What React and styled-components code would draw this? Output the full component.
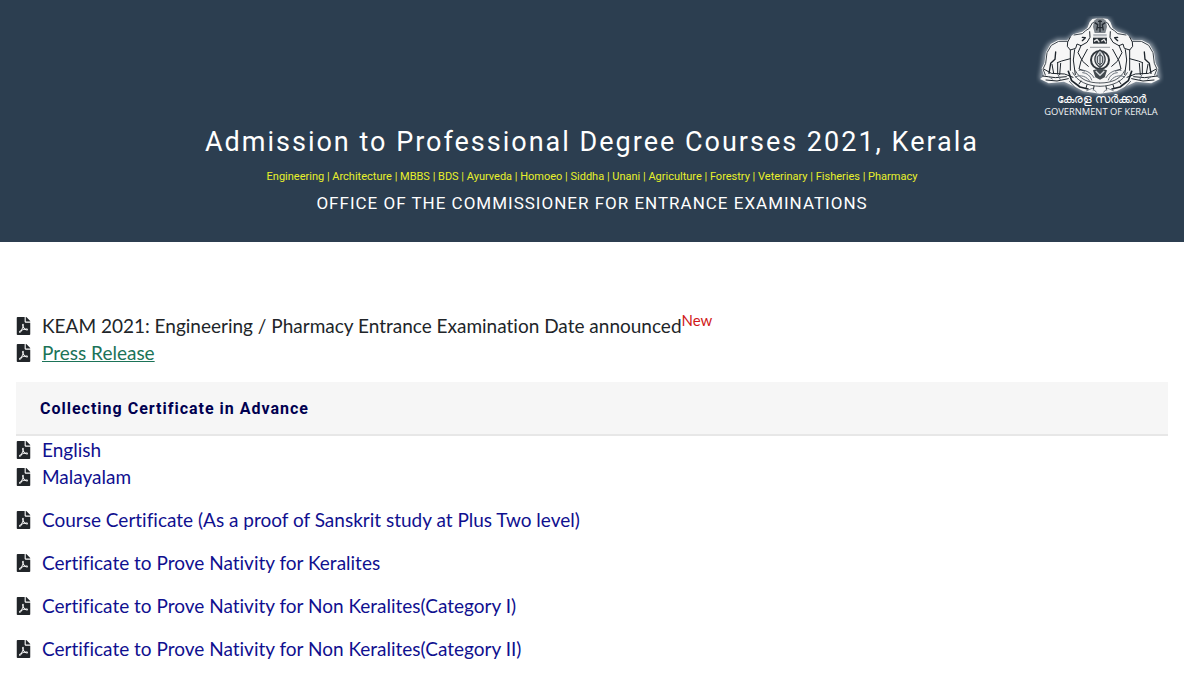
import React from 'react';
import styled, { createGlobalStyle } from 'styled-components';
import { FaFilePdf } from 'react-icons/fa';

const GlobalStyle = createGlobalStyle`
  * { box-sizing: border-box; }
  body {
    margin: 0;
    background: #fff;
    color: #212529;
    font-family: Lato, "Liberation Sans", sans-serif;
    font-size: 19px;
    line-height: 27px;
    font-variant-ligatures: no-common-ligatures;
  }
`;

const Page = styled.div`
  padding-right: 16px;
`;

const Header = styled.header`
  display: flex;
  flex-direction: column;
  align-items: center;
  padding: 16px 20px 27px;
  background: #2c3e50;
  color: #fff;
  font-family: Roboto, "Liberation Sans", sans-serif;
  text-align: center;
`;

const Emblem = styled.svg`
  width: 128px;
  height: 102px;
  align-self: flex-end;
`;

const Title = styled.h1`
  margin: 4px 0 0;
  font-size: 27px;
  font-weight: 400;
  line-height: 40px;
  letter-spacing: 2px;
`;

const Courses = styled.p`
  margin: 5px 0 0;
  color: #e8f02a;
  font-size: 11px;
  line-height: 20px;
`;

const Office = styled.h2`
  margin: 4px 0 0;
  font-size: 17px;
  font-weight: 400;
  line-height: 24px;
  letter-spacing: 1px;
`;

const Main = styled.main`
  padding: 70px 16px 0;
`;

const List = styled.ul`
  margin: 0;
  padding: 0;
  list-style: none;
`;

const Item = styled.li`
  display: flex;
  align-items: center;
  margin-bottom: ${(p) => (p.$spaced ? '16px' : '0')};
`;

const PdfIcon = styled(FaFilePdf)`
  width: 15px;
  height: 18px;
  margin-right: 11px;
`;

const Link = styled.a`
  color: ${(p) => (p.$visited ? '#1b7358' : '#10108f')};
  text-decoration: ${(p) => (p.$visited ? 'underline' : 'none')};
`;

const New = styled.sup`
  color: #d01818;
  font-size: 15px;
  line-height: 0;
`;

const SectionHead = styled.h3`
  margin: 16px 0 0;
  padding: 13px 24px 12px;
  background: #f6f6f6;
  border-bottom: 2px solid #e7e7e7;
  color: #000050;
  font-family: Roboto, "Liberation Sans", sans-serif;
  font-size: 16px;
  font-weight: 700;
  letter-spacing: 1px;
`;

const documents = [
  { title: 'English' },
  { title: 'Malayalam', spaced: true },
  { title: 'Course Certificate (As a proof of Sanskrit study at Plus Two level)', spaced: true },
  { title: 'Certificate to Prove Nativity for Keralites', spaced: true },
  { title: 'Certificate to Prove Nativity for Non Keralites(Category I)', spaced: true },
  { title: 'Certificate to Prove Nativity for Non Keralites(Category II)', spaced: true },
];

// one side of the state emblem, the other side is its mirror image
const EmblemHalf = () => (
  <g fill="none" stroke="#1d242b" strokeWidth="3" strokeLinejoin="round" strokeLinecap="round">
    <path
      d="M240 54 L217 57 L209 66 L202 84 L187 95 L160 103 L141 121 L115 120 L92 132 L78 157 L73 190 L65 205 L72 228 L60 237 L86 250 L132 245 L165 260 L190 274 L240 281 Z"
      fill="#f6f6f6"
      stroke="none"
    />
    {/* back and hind leg */}
    <path d="M142 124 L116 124 L94 136 L81 158 L77 190 L69 207 L76 225" stroke="#3a434b" />
    <path d="M107 156 L105 178 L92 190 L87 220" strokeWidth="4" />
    <path d="M112 188 L125 183 L151 176 M96 193 L101 220 M113 190 L113 222 M122 190 L119 224" />
    {/* head, ear and raised trunk */}
    <path d="M151 111 L143 126 L142 139 L151 150 L167 145 L171 132 L183 137 L201 127 L210 112 L209 95" />
    <path d="M162 105 L187 101 L197 92 L208 85 L217 69 L232 62" stroke="#3a434b" />
    <path d="M187 112 L196 113 L187 122" strokeWidth="4" />
    <path d="M183 137 L174 158 L188 184 L205 199 M151 150 L151 211 M164 149 L160 180 L166 224" />
    <path d="M202 148 L183 183 L177 207 L193 213" />
    {/* pedestal */}
    <path d="M73 208 L94 220 L134 222 L159 232 M68 228 L106 233 L139 230 M78 240 L111 243 L145 236" />
    <path d="M145 214 L155 242 L180 261 L204 267" strokeWidth="5" />
    <path d="M158 218 C172 244 201 258 240 259 M166 212 C180 238 204 249 240 249" stroke="#50575d" />
    <path d="M177 211 C192 207 212 216 222 233 M188 218 C202 219 211 228 215 240 M166 231 C180 222 203 230 209 244" stroke="#68707a" />
    <path d="M177 252 L183 243 M198 264 L201 254 M220 270 L222 259" />
    <path d="M85 229 L97 237 M115 225 L121 240 M148 244 L169 267" stroke="#68707a" />
    <path d="M200 272 L217 265 L229 276" stroke="#7d858d" />
  </g>
);

const KeralaEmblem = () => (
  <Emblem viewBox="48 48 384 306" role="img" aria-label="Government of Kerala">
    <defs>
      <filter id="glow" x="-20%" y="-20%" width="140%" height="140%">
        <feGaussianBlur stdDeviation="7" />
      </filter>
    </defs>
    <path
      d="M240 54 L212 57 L202 84 L162 101 L142 118 L112 118 L86 132 L72 158 L66 200 L60 237 L86 252 L132 250 L190 276 L240 282 L290 276 L348 250 L394 252 L420 237 L414 200 L408 158 L394 132 L368 118 L338 118 L318 101 L278 84 L268 57 Z"
      fill="#b4bcc4"
      stroke="#b4bcc4"
      strokeWidth="4"
      opacity="0.8"
      filter="url(#glow)"
    />
    <EmblemHalf />
    <g transform="translate(480 0) scale(-1 1)">
      <EmblemHalf />
    </g>
    {/* lion capital */}
    <path d="M222 62 L232 55 L248 55 L258 62 L261 80 L256 99 L224 99 L219 80 Z" fill="#7b8289" />
    <path d="M224 68 L233 74 L230 91 M256 68 L247 74 L250 91 M240 60 V96 M234 64 H246 M232 83 H248" fill="none" stroke="#252c33" strokeWidth="4" />
    <rect x="220" y="102" width="40" height="7" fill="#b7bbc0" />
    <path d="M219 113 H261 V131 H219 Z" fill="#2b3238" />
    <path d="M222 124 L231 118 L238 127 M244 124 L252 118 L258 127" fill="none" stroke="#e8e8e8" strokeWidth="4" />
    <path d="M211 142 H270" stroke="#83898e" strokeWidth="4" strokeDasharray="4 2" />
    {/* conch inside its ring */}
    <circle cx="240" cy="180" r="27" fill="#f4f4f4" stroke="#30363b" strokeWidth="6" />
    <path d="M240 150 C218 169 221 190 240 202 C259 190 262 169 240 150 Z" fill="#d9dcdf" stroke="#343b41" strokeWidth="4" />
    <path d="M240 158 V198 M232 170 V188 L240 194 L248 188 V170 L240 164 Z" fill="none" stroke="#3b4248" strokeWidth="3" />
    <path d="M219 211 L240 205 L261 211 L254 232 L240 239 L226 232 Z" fill="#42494f" />
    <path d="M227 213 L240 226 L253 213" fill="none" stroke="#d5d9dc" strokeWidth="4" />
    <text x="244" y="309" textAnchor="middle" fontSize="36" fill="#fff">കേരള സര്‍ക്കാര്‍</text>
    <text x="243" y="345" textAnchor="middle" fontSize="28" fontWeight="500" fill="#f0f3f5" fontFamily="Open Sans, sans-serif">GOVERNMENT OF KERALA</text>
  </Emblem>
);

export default function App() {
  return (
    <>
      <GlobalStyle />
      <Page>
        <Header>
          <KeralaEmblem />
          <Title>Admission to Professional Degree Courses 2021, Kerala</Title>
          <Courses>
            Engineering | Architecture | MBBS | BDS | Ayurveda | Homoeo | Siddha | Unani | Agriculture | Forestry | Veterinary | Fisheries | Pharmacy
          </Courses>
          <Office>OFFICE OF THE COMMISSIONER FOR ENTRANCE EXAMINATIONS</Office>
        </Header>
        <Main>
          <List>
            <Item>
              <PdfIcon />
              <span>KEAM 2021: Engineering / Pharmacy Entrance Examination Date announced<New>New</New></span>
            </Item>
            <Item>
              <PdfIcon />
              <Link href="#press" $visited>Press Release</Link>
            </Item>
          </List>
          <SectionHead>Collecting Certificate in Advance</SectionHead>
          <List>
            {documents.map((doc) => (
              <Item key={doc.title} $spaced={doc.spaced}>
                <PdfIcon />
                <Link href="#document">{doc.title}</Link>
              </Item>
            ))}
          </List>
        </Main>
      </Page>
    </>
  );
}
